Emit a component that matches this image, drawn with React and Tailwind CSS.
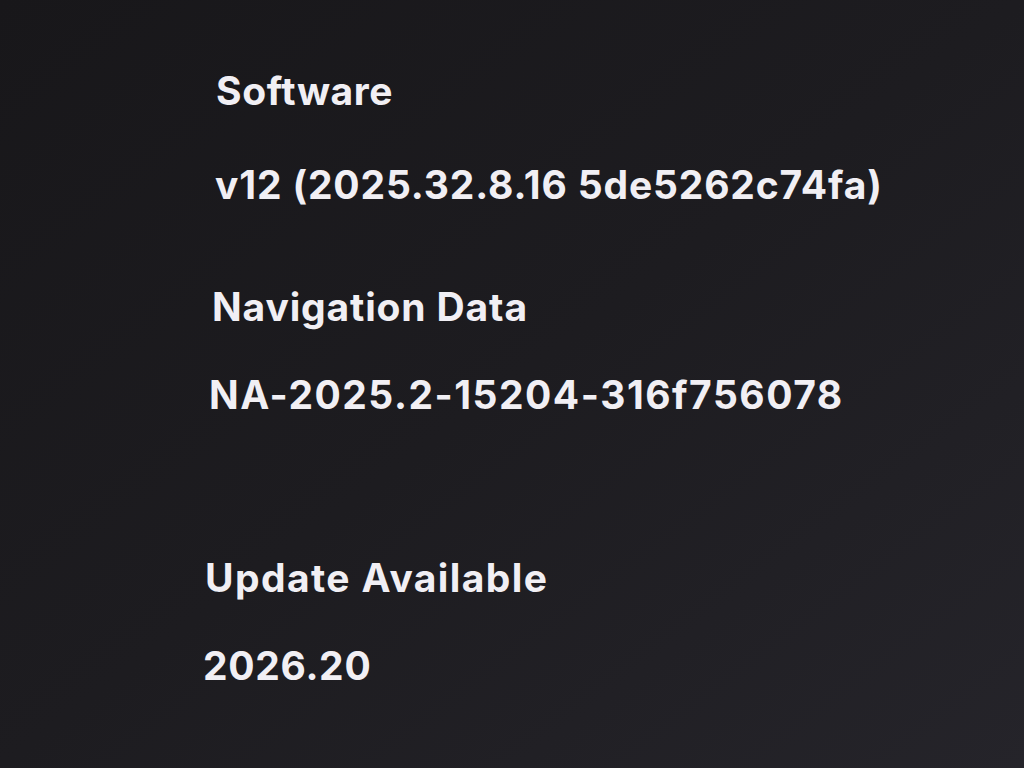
export default function App() {
  const font = { fontFamily: "Inter, 'Noto Sans', sans-serif" };
  return (
    <div
      className="w-[1024px] h-[768px] overflow-hidden bg-linear-to-br from-[#18171a] via-[#1d1c20] to-[#25242a] text-[#f1eff4] font-bold text-[39px] leading-[48px] tracking-[1px]"
      style={font}
    >
      <div className="pt-[67px] flex flex-col">
        <div className="pl-[216px] tracking-[0.6px]">Software</div>
        <div className="pl-[215px] mt-[46px] tracking-[0.85px]">v12 (2025.32.8.16 5de5262c74fa)</div>
        <div className="pl-[212px] mt-[74px] tracking-[0.85px]">Navigation Data</div>
        <div className="pl-[209px] mt-[40px] tracking-[1.5px]">NA-2025.2-15204-316f756078</div>
        <div className="pl-[205px] mt-[135px] tracking-[1.4px]">Update Available</div>
        <div className="pl-[203px] mt-[40px] tracking-[0.7px]">2026.20</div>
      </div>
    </div>
  );
}
